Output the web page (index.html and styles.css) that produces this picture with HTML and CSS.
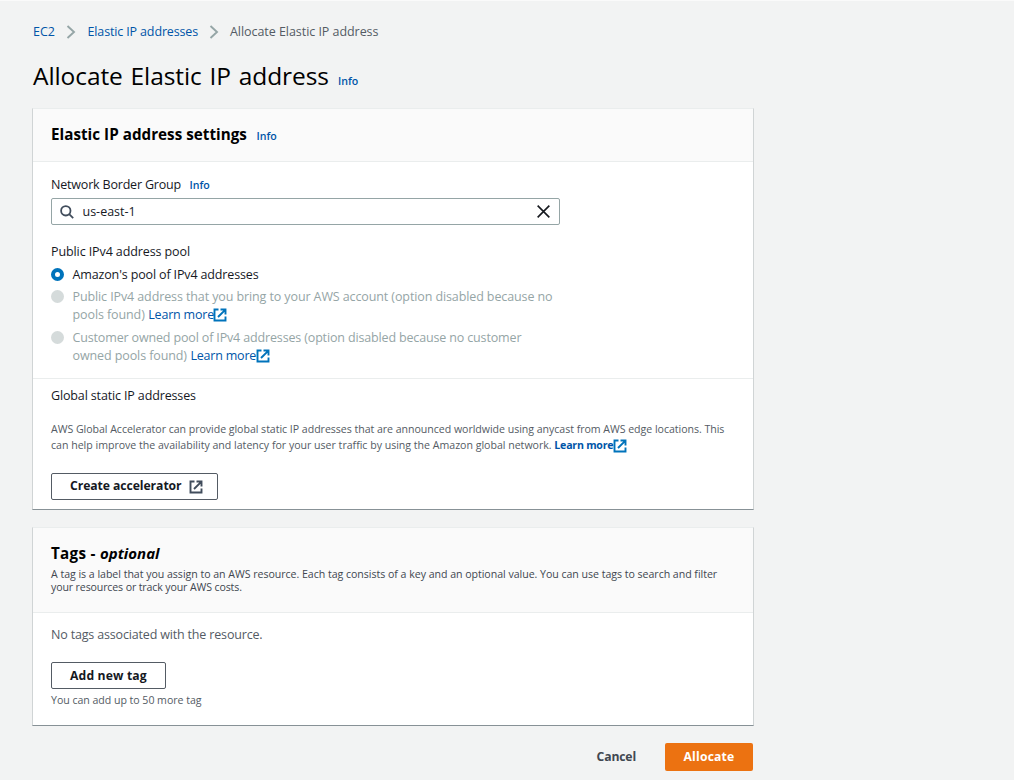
FILE: index.html
```html
<!DOCTYPE html>
<html lang="en">
<head>
<meta charset="utf-8">
<title>Allocate Elastic IP address</title>
<link rel="stylesheet" href="styles.css">
</head>
<body>
<svg class="defs" aria-hidden="true">
  <symbol id="external" viewBox="0 0 14 14"><path d="M5.5 1.5h-4v11h11V8.5M7.5 1.5h5v5M12.2 1.8 5 9" fill="none" stroke="currentColor" stroke-width="1.9"/></symbol>
  <symbol id="chevron" viewBox="0 0 10 14"><path d="M1.5 1 8 7l-6.500 6" fill="none" stroke="currentColor" stroke-width="1.9"/></symbol>
</svg>
<main class="page">
  <nav class="breadcrumbs">
    <a class="bc-root">EC2</a>
    <svg class="chevron"><use href="#chevron"/></svg>
    <a class="bc-list">Elastic IP addresses</a>
    <svg class="chevron"><use href="#chevron"/></svg>
    <span class="bc-current">Allocate Elastic IP address</span>
  </nav>
  <header class="title-row"><h1>Allocate Elastic IP address</h1><a class="info">Info</a></header>

  <section class="card settings">
    <div class="card-header"><h2>Elastic IP address settings</h2><a class="info">Info</a></div>
    <div class="card-body">
      <div class="label-row"><label class="group-label">Network Border Group</label><a class="info">Info</a></div>
      <div class="search">
        <svg class="search-icon" viewBox="0 0 14 14"><circle cx="5.8" cy="5.8" r="4.7"/><path d="m9.2 9.2 4 4"/></svg>
        <span class="search-value">us-east-1</span>
        <svg class="clear-icon" viewBox="0 0 12 12"><path d="m.6.6 10.800 10.800M11.400.6.6 11.400"/></svg>
      </div>
      <div class="pool-label">Public IPv4 address pool</div>
      <div class="option"><i class="radio checked"></i><span>Amazon's pool of IPv4 addresses</span></div>
      <div class="option disabled"><i class="radio"></i><div><div class="line tight">Public IPv4 address that you bring to your AWS account (option disabled because no</div><div class="line"><span class="tail">pools found)</span><a class="learn">Learn more</a><svg class="ext"><use href="#external"/></svg></div></div></div>
      <div class="option disabled"><i class="radio"></i><div><div class="line customer">Customer owned pool of IPv4 addresses (option disabled because no customer</div><div class="line"><span class="tail">owned pools found)</span><a class="learn">Learn more</a><svg class="ext"><use href="#external"/></svg></div></div></div>
    </div>
    <div class="accelerator">
      <div class="static-label">Global static IP addresses</div>
      <p class="hint">AWS Global Accelerator can provide global static IP addresses that are announced worldwide using anycast from AWS edge locations. This<br><span class="hint-end">can help improve the availability and latency for your user traffic by using the Amazon global network. </span><a class="learn-bold">Learn more<svg class="ext"><use href="#external"/></svg></a></p>
      <button class="btn create">Create accelerator<svg class="ext"><use href="#external"/></svg></button>
    </div>
  </section>

  <section class="card tags">
    <div class="tags-header">
      <h2>Tags - <em>optional</em></h2>
      <p>A tag is a label that you assign to an AWS resource. Each tag consists of a key and an optional value. You can use tags to search and filter<br><span class="desc-end">your resources or track your AWS costs.</span></p>
    </div>
    <div class="tags-body">
      <div class="empty">No tags associated with the resource.</div>
      <button class="btn add">Add new tag</button>
      <div class="limit">You can add up to 50 more tag</div>
    </div>
  </section>

  <footer class="actions"><button class="cancel">Cancel</button><button class="allocate">Allocate</button></footer>
</main>
</body>
</html>
```
FILE: styles.css
```css
* { box-sizing: border-box; }
body {
  margin: 0;
  height: 780px;
  overflow: hidden;
  background: #f2f3f3;
  border-top: 1px solid #fafafa;
  color: #16191f;
  font: 12.5px/18px "Open Sans", "Noto Sans", sans-serif;
  letter-spacing: -.14px;
  white-space: nowrap;
}
h1, h2, p { margin: 0; }
a { color: #0055a8; }
.defs { display: none; }
.page { width: 722px; margin-left: 32px; padding-top: 22px; }

.breadcrumbs { display: flex; align-items: center; height: 18px; padding-left: 1px; }
.bc-root { width: 33px; letter-spacing: 0; }
.chevron { width: 10px; height: 14px; color: #95a5a6; }
.bc-list { width: 121px; margin-left: 11.5px; }
.bc-current { margin-left: 11.5px; color: #545b64; letter-spacing: -.05px; }

.title-row { display: flex; align-items: baseline; height: 32px; margin-top: 18px; padding-left: 1px; }
h1 { width: 305px; color: #000; font-size: 24.5px; font-weight: 400; line-height: 33px; letter-spacing: -.08px; word-spacing: 1.5px; }
.info { font-size: 10.6px; font-weight: 600; letter-spacing: 0; }

.card {
  background: #fff;
  border: 1px solid #d0d4d5;
  border-top-color: #eaeded;
  border-bottom-color: #879196;
}
.settings { height: 402px; margin-top: 17px; }
.card-header {
  display: flex;
  align-items: baseline;
  height: 53px;
  padding: 15px 18px 0;
  background: #fafafa;
  border-bottom: 1px solid #eaeded;
}
h2 { color: #000; font-size: 15.2px; font-weight: 700; line-height: 20px; letter-spacing: .03px; }
.card-header h2 { width: 205.5px; }
.card-body { height: 217px; padding: 14px 18px 0; border-bottom: 1px solid #eaeded; }
.label-row { display: flex; align-items: baseline; height: 18px; }
.group-label { width: 138.5px; letter-spacing: -.19px; }

.search {
  display: flex;
  align-items: center;
  width: 509px;
  height: 27px;
  margin-top: 4px;
  padding: 0 9px 0 8px;
  border: 1px solid #95a5a6;
  border-radius: 2px;
}
.search svg { fill: none; stroke: #414d5c; stroke-width: 1.8; }
.search-icon { width: 14px; height: 14px; }
.search-value { flex: 1; margin-left: 8.5px; letter-spacing: 0; }
.search .clear-icon { width: 13px; height: 13px; stroke: #16191f; stroke-width: 1.5; }

.pool-label { margin-top: 18px; letter-spacing: -.1px; }
.option { display: flex; margin-top: 5px; }
.pool-label + .option { margin-bottom: -1px; }
.radio { width: 13px; height: 13px; margin: 2px 8.5px 0 0; border-radius: 50%; background: #d5dbdb; }
.radio.checked { background: #fff; border: 4px solid #0073bb; }
.disabled { color: #95a5a6; }
.line { display: flex; align-items: center; height: 18px; }
.tight { letter-spacing: -.106px; }
.customer { letter-spacing: -.15px; }
.tail { margin-right: 3.5px; letter-spacing: -.1px; }
.learn { letter-spacing: -.2px; }
.ext { width: 14px; height: 14px; color: #0073bb; }
.disabled .ext { margin-left: -.5px; }

.accelerator { padding: 8px 18px 0; }
.hint, .limit { color: #545b64; font-size: 10.6px; line-height: 16px; letter-spacing: -.035px; }
.hint { margin-top: 16px; }
.hint-end { letter-spacing: -.01px; }
.learn-bold { font-weight: 700; letter-spacing: -.22px; }
.learn-bold .ext { margin: -3px 0; vertical-align: -1px; }
.btn {
  display: flex;
  align-items: center;
  height: 27px;
  padding: 0 0 1px 18px;
  border: 1px solid #545b64;
  border-radius: 2px;
  background: #fff;
  color: #16191f;
  font: 700 12.2px/18px "Open Sans", "Noto Sans", sans-serif;
}
.create { width: 167px; margin-top: 20px; padding-bottom: 2px; letter-spacing: -.07px; }
.create .ext { margin: 2px 0 0 7.5px; color: #414d5c; }

.tags { height: 199px; margin-top: 17px; }
.tags-header { height: 85px; padding: 15px 18px 0; background: #fafafa; border-bottom: 1px solid #eaeded; }
.tags-header h2 { letter-spacing: .3px; }
.tags-header em { font-size: 15px; letter-spacing: 0; }
.tags-header p { margin-top: 5px; color: #414750; font-size: 10.6px; line-height: 13px; letter-spacing: -.03px; }
.desc-end { letter-spacing: -.13px; }
.tags-body { padding: 13px 18px 0; }
.empty { color: #545b64; letter-spacing: -.168px; }
.add { width: 115px; margin-top: 18px; padding-bottom: 0; letter-spacing: .14px; }
.limit { margin-top: 3px; }

.actions { display: flex; justify-content: flex-end; gap: 29px; height: 28px; margin-top: 17px; padding-right: 1px; }
.actions button { border: 0; border-radius: 2px; font: 700 12.2px/28px "Open Sans", "Noto Sans", sans-serif; padding: 0; }
.cancel { background: none; color: #414750; letter-spacing: -.15px; }
.allocate { width: 88px; background: #ec7211; color: #fff; letter-spacing: .18px; }
```
